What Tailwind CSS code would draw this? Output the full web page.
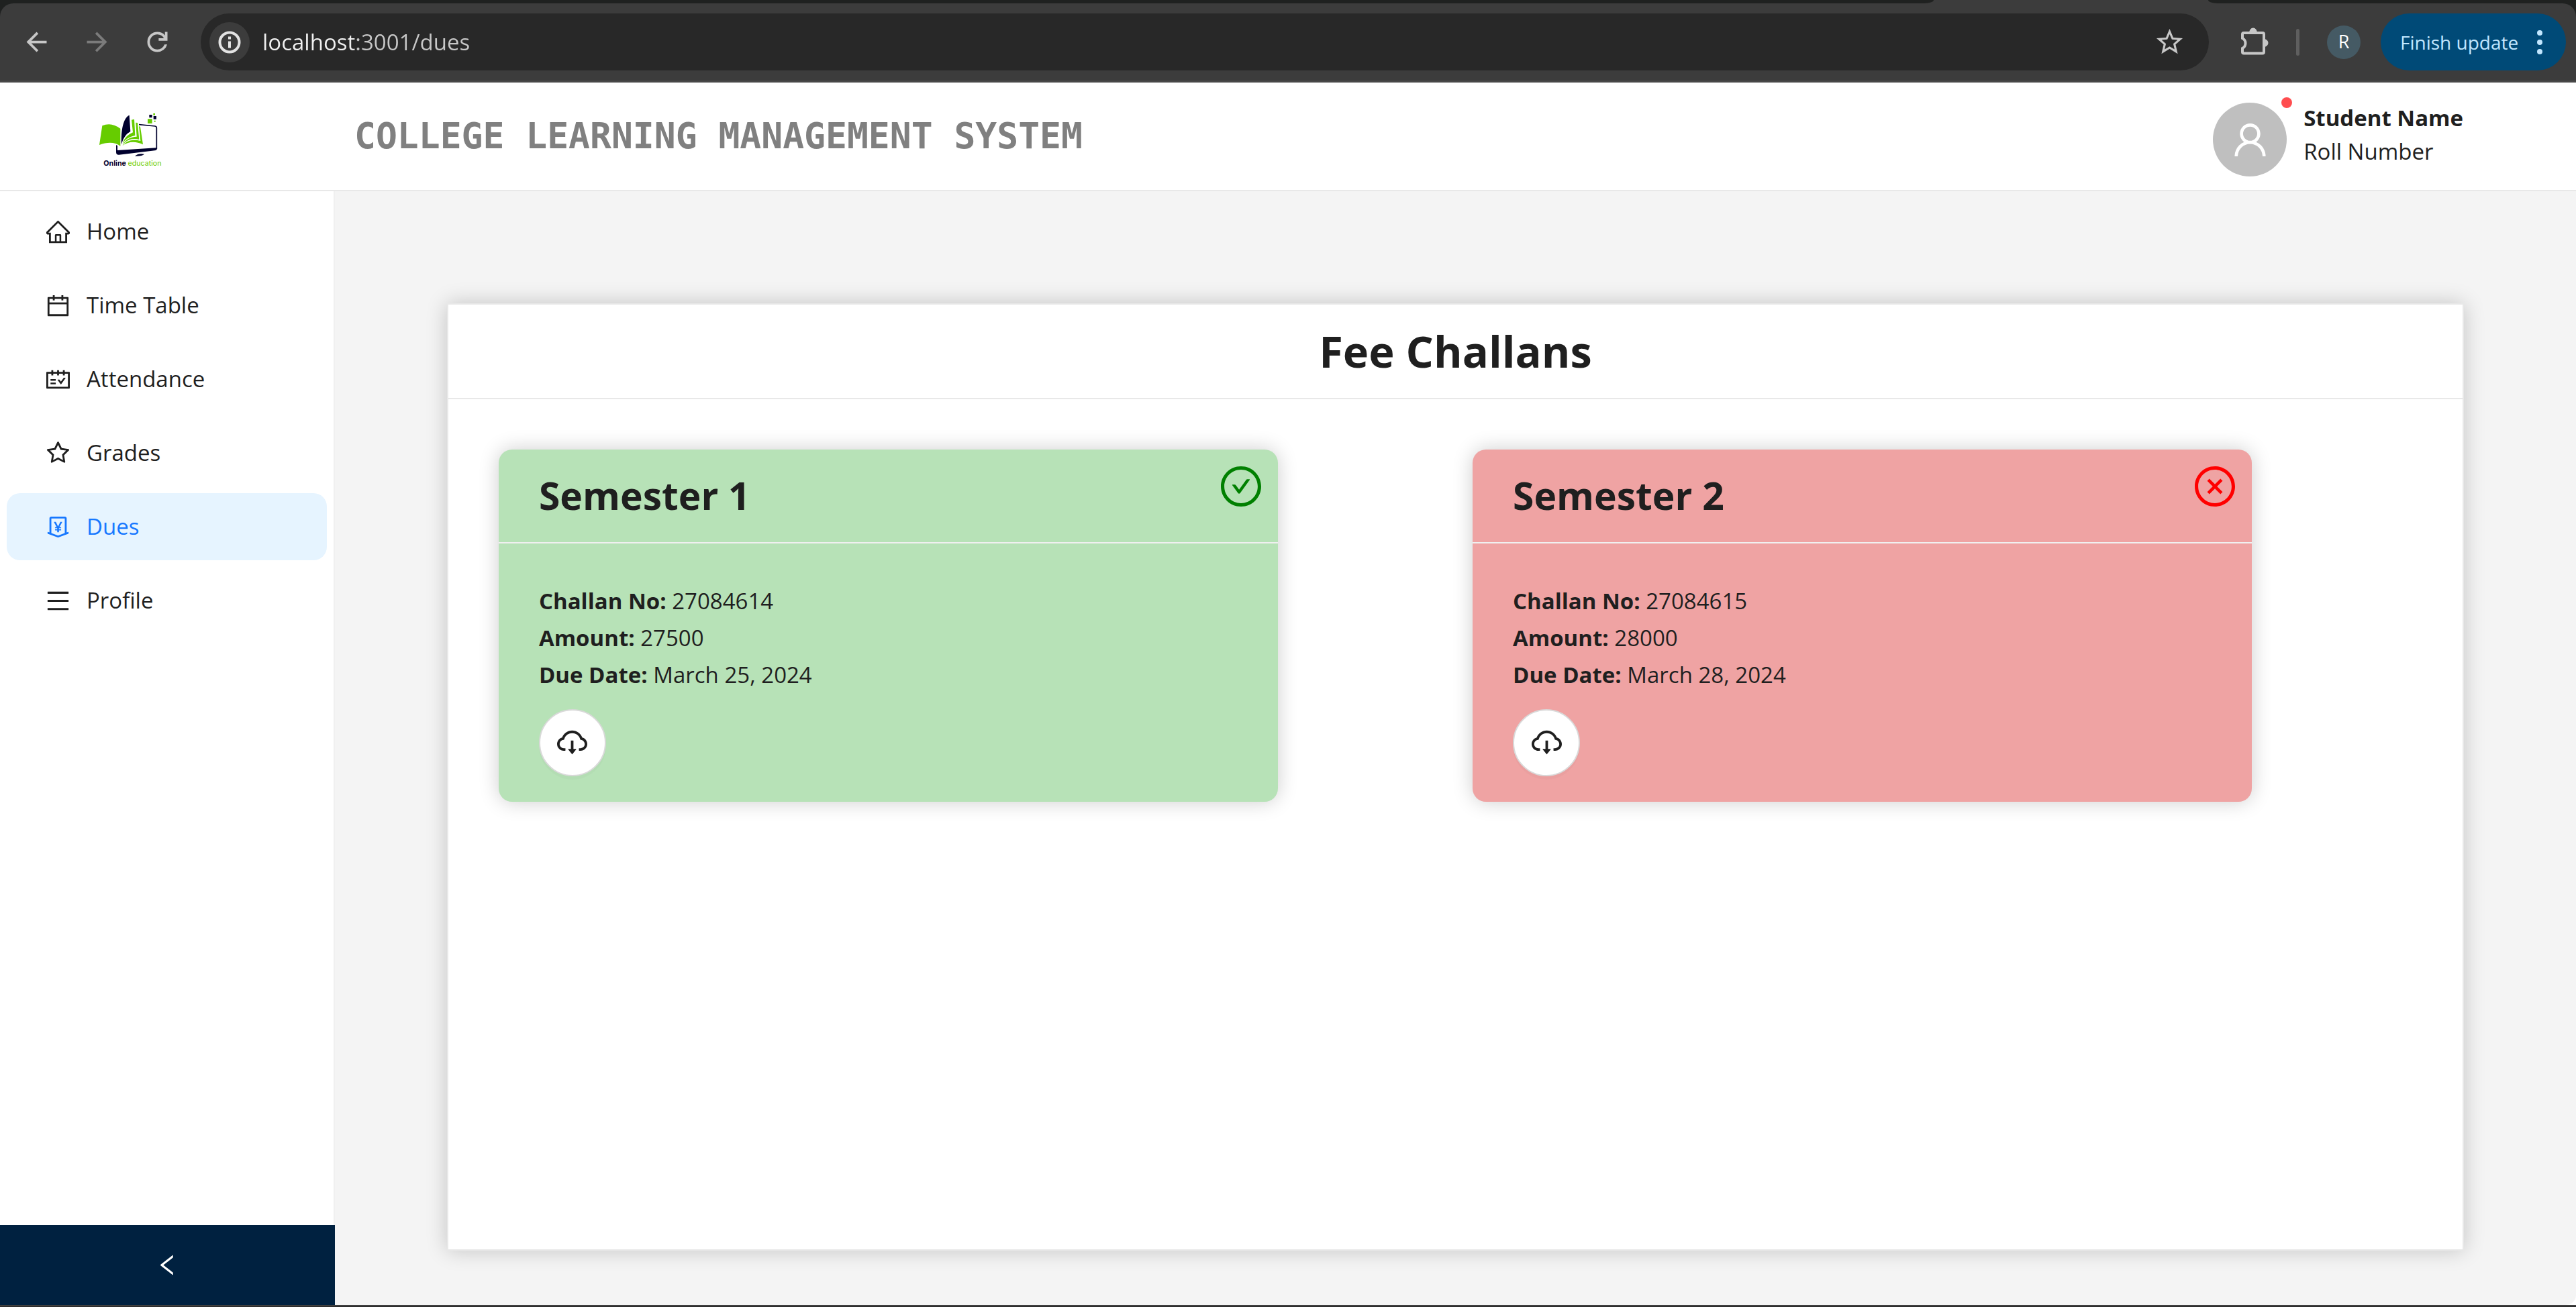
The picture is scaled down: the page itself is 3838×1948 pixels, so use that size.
<!DOCTYPE html>
<html lang="en">
<head>
<meta charset="utf-8">
<title>College Learning Management System</title>
<script src="https://cdn.jsdelivr.net/npm/@tailwindcss/browser@4"></script>
</head>
<body class="flex min-h-screen flex-col bg-white font-['Open_Sans',sans-serif] text-[33px] text-[#1f1f1f]">

<!-- Browser toolbar -->
<div class="bg-[#1f2120]">
  <div class="flex h-[5px] bg-[#3c3c3c]">
    <div class="flex-1 rounded-br-[14px_5px] bg-[#1f2120]"></div>
    <div class="w-[409px]"></div>
    <div class="w-[548px] rounded-bl-[14px_5px] bg-[#1f2120]"></div>
  </div>
  <div class="flex items-center rounded-t-[20px] border-b-[3px] border-[#484848] bg-[#3c3c3c] py-[15px] pr-[15px] pl-[9px]">
    <button type="button" aria-label="Back" class="flex w-[90px] justify-center text-[#c7c7c7]">
      <svg class="size-[45px]" viewBox="0 0 24 24" fill="currentColor"><path d="m7.825 13l5.6 5.6L12 20l-8-8l8-8l1.425 1.4l-5.6 5.6H20v2z"/></svg>
    </button>
    <button type="button" aria-label="Forward" class="flex w-[90px] justify-center text-[#7b7b7b]">
      <svg class="size-[45px]" viewBox="0 0 24 24" fill="currentColor"><path d="m16.175 13l-5.6 5.6L12 20l8-8l-8-8l-1.425 1.4l5.6 5.6H4v2z"/></svg>
    </button>
    <button type="button" aria-label="Reload" class="flex w-[90px] justify-center text-[#c7c7c7]">
      <svg class="size-[45px]" viewBox="0 0 24 24" fill="currentColor"><path d="M12 20q-3.35 0-5.675-2.325T4 12t2.325-5.675T12 4q1.725 0 3.3.713T18 6.75V4h2v7h-7V9h4.2q-.8-1.4-2.187-2.2T12 6Q9.5 6 7.75 7.75T6 12t1.75 4.25T12 18q1.925 0 3.475-1.1T17.65 14h2.1q-.7 2.65-2.85 4.325T12 20"/></svg>
    </button>
    <div class="ml-5 flex h-[85px] flex-1 items-center rounded-full bg-[#282828] pr-[35px] pl-[13px]">
      <button type="button" aria-label="View site information" class="flex size-[60px] items-center justify-center rounded-full bg-[#3c3c3c]">
        <svg class="size-9" viewBox="0 0 36 36" fill="none" stroke="#e3e3e3" stroke-width="4"><circle cx="18" cy="18" r="14.5"/><path d="M18 16.500v10M18 9.500v4"/></svg>
      </button>
      <input type="text" aria-label="Address" value="localhost:3001/dues" class="ml-[19px] min-w-0 flex-1 bg-[linear-gradient(90deg,#f0f0f0_141px,#c7c7c7_141px)] bg-clip-text text-transparent outline-none">
      <button type="button" aria-label="Bookmark this page" class="text-[#c7c7c7]">
        <svg class="size-[47px]" viewBox="0 0 24 24" fill="currentColor"><path d="M22 9.240l-7.190-.62L12 2 9.190 8.630 2 9.240l5.460 4.730L5.820 21 12 17.270 18.180 21l-1.630-7.030L22 9.240zM12 15.400l-3.760 2.270 1-4.280-3.320-2.880 4.380-.38L12 6.100l1.710 4.040 4.380.38-3.320 2.880 1 4.280L12 15.400z"/></svg>
      </button>
    </div>
    <button type="button" aria-label="Extensions" class="ml-11">
      <svg class="size-12" viewBox="0 0 48 48" fill="#c7c7c7"><path d="M6 18V12Q6 10 8 10H36Q38 10 38 12V38.500Q38 40.500 36 40.500H8Q6 40.500 6 38.500V33A8.500 8.500 0 0 0 6 18Z" fill="none" stroke="#c7c7c7" stroke-width="4"/><path d="M16 10a6 7.500 0 0 1 12 0zM38 19a6.500 6 0 0 1 0 12z"/></svg>
    </button>
    <div class="ml-[38px] h-10 w-[5px] rounded-full bg-[#5f5f5f]"></div>
    <button type="button" aria-label="Account" class="ml-[41px] flex size-[50px] items-center justify-center rounded-full bg-[#455a64] text-[27px] text-white">R</button>
    <button type="button" class="ml-[30px] flex h-[85px] w-[276px] items-center justify-between rounded-full bg-[#004a77] pr-[35px] pl-[29px] text-[28px] text-[#c2e7ff]">
      Finish update
      <svg class="h-10 w-2" viewBox="0 0 8 40" fill="currentColor"><circle cx="4" cy="6" r="4"/><circle cx="4" cy="20" r="4"/><circle cx="4" cy="34" r="4"/></svg>
    </button>
  </div>
</div>

<!-- App header -->
<header class="flex h-[162px] items-center border-b-2 border-[#e8e8e8] bg-white pr-[168px] pl-[145px]">
  <svg class="size-[100px]" viewBox="75 9 300 300" role="img" aria-label="Online education">
    <g fill="#66cc00">
      <path d="M97 112Q138 94 178 125V203Q142 176 84 198Z"/>
      <path d="M228 86L240 83L244 156C218 162 200 172 188 192C196 166 210 154 234 142Z"/>
      <path d="M247 98L255 99L262 174C232 166 206 176 188 197C200 174 222 162 251 161Z"/>
      <path d="M261 114L267 117L279 196C246 180 212 182 187 202C204 180 232 170 268 180Z"/>
      <path d="M300 82h20v20h-20zM325 57h8v8h-8zM329 89h6v6h-6z"/>
    </g>
    <g fill="#00002e">
      <path d="M183 196C180 130 192 76 218 65L223 138C204 148 190 168 183 196Z"/>
      <path d="M159 198L165 202V222L338 211L342 214Q342 222 332 223L172 242Q159 243 159 230Z"/>
      <path d="M243 248Q258 234 285 239Q276 249 243 248Z"/>
      <path d="M307 63h13v13h-13zM326 69h13v14h-13z"/>
      <path d="M261 107L333 114Q340 115 340 122V216" fill="none" stroke="#00002e" stroke-width="5"/>
    </g>
    <text x="103" y="290" font-family="Inter, sans-serif" font-size="32" fill="#00002e" font-weight="700">Online <tspan fill="#66cc00" font-weight="400">education</tspan></text>
  </svg>
  <h1 class="ml-[283px] font-['DejaVu_Sans_Mono',monospace] text-[53px] font-bold text-[#808080]">COLLEGE LEARNING MANAGEMENT SYSTEM</h1>
  <div class="ml-auto flex gap-[25px] self-start pt-7">
    <div class="relative mt-0.5 flex size-[110px] items-center justify-center rounded-full bg-[#bfbfbf]">
      <svg class="size-[55px]" viewBox="64 64 896 896" fill="#fff"><path d="M858.500 763.600a374 374 0 00-80.600-119.500 375.630 375.630 0 00-119.500-80.600c-.4-.2-.8-.3-1.200-.5C719.500 518 760 444.700 760 362c0-137-111-248-248-248S264 225 264 362c0 82.700 40.500 156 102.800 201.100-.4.2-.8.3-1.200.5-44.800 18.900-85 46-119.500 80.600a375.630 375.630 0 00-80.600 119.500A371.700 371.700 0 00136 901.800a8 8 0 008 8.200h60c4.400 0 7.900-3.500 8-7.800 2-77.200 33-149.500 87.800-204.300 56.700-56.700 132-87.900 212.200-87.900s155.500 31.200 212.200 87.900C779 752.700 810 825 812 902.200c.1 4.400 3.600 7.800 8 7.800h60a8 8 0 008-8.200c-1-47.800-10.900-94.300-29.500-138.200zM512 534c-45.900 0-89.100-17.900-121.600-50.400S340 407.900 340 362c0-45.900 17.900-89.100 50.400-121.600S466.100 190 512 190s89.100 17.900 121.600 50.400S684 316.100 684 362c0 45.900-17.900 89.100-50.400 121.600S557.900 534 512 534z"/></svg>
      <span class="absolute -top-2 -right-2 size-4 rounded-full bg-[#ff4d4f]"></span>
    </div>
    <div class="leading-[50px]">
      <p class="font-bold">Student Name</p>
      <p>Roll Number</p>
    </div>
  </div>
</header>

<div class="flex flex-1">
  <!-- Side menu -->
  <aside class="flex w-[499px] shrink-0 flex-col bg-white">
    <nav class="flex flex-1 flex-col gap-[10px] border-r-2 border-[#f0f0f0] p-[10px] leading-[100px]">
      <a href="#home" class="flex items-center gap-[25px] rounded-[20px] pl-[59px]">
        <svg class="size-[35px]" viewBox="64 64 896 896" fill="currentColor"><path d="M946.500 505L560.100 118.800l-25.900-25.900a31.500 31.500 0 00-44.400 0L77.500 505a63.900 63.900 0 00-18.800 46c.4 35.200 29.700 63.300 64.900 63.300h42.500V940h691.800V614.300h43.400c17.100 0 33.200-6.700 45.300-18.800a63.600 63.600 0 0018.700-45.300c0-17-6.700-33.100-18.800-45.200zM568 868H456V664h112v204zm217.900-325.700V868H632V640c0-22.100-17.900-40-40-40H432c-22.100 0-40 17.900-40 40v228H238.100V542.300h-96l370-369.700 23.100 23.100L882 542.300h-96.100z"/></svg>
        Home</a>
      <a href="#timetable" class="flex items-center gap-[25px] rounded-[20px] pl-[59px]">
        <svg class="size-[35px]" viewBox="64 64 896 896" fill="currentColor"><path d="M880 184H712v-64c0-4.400-3.600-8-8-8h-56c-4.400 0-8 3.600-8 8v64H384v-64c0-4.400-3.600-8-8-8h-56c-4.400 0-8 3.600-8 8v64H144c-17.700 0-32 14.300-32 32v664c0 17.700 14.300 32 32 32h736c17.700 0 32-14.300 32-32V216c0-17.700-14.300-32-32-32zm-40 656H184V460h656v380zM184 392V256h128v48c0 4.400 3.600 8 8 8h56c4.400 0 8-3.600 8-8v-48h256v48c0 4.400 3.600 8 8 8h56c4.400 0 8-3.600 8-8v-48h128v136H184z"/></svg>
        Time Table</a>
      <a href="#attendance" class="flex items-center gap-[25px] rounded-[20px] pl-[59px]">
        <svg class="size-[35px]" viewBox="64 64 896 896" fill="currentColor"><path d="M928 224H768v-56c0-4.400-3.600-8-8-8h-56c-4.400 0-8 3.600-8 8v56H548v-56c0-4.400-3.600-8-8-8h-56c-4.400 0-8 3.600-8 8v56H328v-56c0-4.400-3.600-8-8-8h-56c-4.400 0-8 3.600-8 8v56H96c-17.700 0-32 14.300-32 32v576c0 17.700 14.300 32 32 32h832c17.700 0 32-14.300 32-32V256c0-17.700-14.300-32-32-32zm-40 568H136V296h120v56c0 4.400 3.600 8 8 8h56c4.400 0 8-3.600 8-8v-56h148v56c0 4.400 3.600 8 8 8h56c4.400 0 8-3.600 8-8v-56h148v56c0 4.400 3.600 8 8 8h56c4.400 0 8-3.600 8-8v-56h120v496zM416 496H232c-4.400 0-8 3.600-8 8v48c0 4.400 3.600 8 8 8h184c4.400 0 8-3.600 8-8v-48c0-4.400-3.600-8-8-8zm0 136H232c-4.400 0-8 3.600-8 8v48c0 4.400 3.600 8 8 8h184c4.400 0 8-3.600 8-8v-48c0-4.400-3.600-8-8-8zm308.200-177.400L620.600 598.300l-52.800-73.100c-3-4.200-7.800-6.600-12.900-6.600H500c-6.500 0-10.300 7.400-6.500 12.700l114.100 158.200a15.900 15.900 0 0025.800 0l165-228.700c3.800-5.300 0-12.700-6.500-12.700H737c-5-.1-9.800 2.400-12.800 6.500z"/></svg>
        Attendance</a>
      <a href="#grades" class="flex items-center gap-[25px] rounded-[20px] pl-[59px]">
        <svg class="size-[35px]" viewBox="64 64 896 896" fill="currentColor"><path d="M908.100 353.100l-253.900-36.900L540.700 86.100c-3.100-6.300-8.200-11.400-14.500-14.500-15.800-7.800-35-1.300-42.900 14.500L369.800 316.200l-253.900 36.900c-7 1-13.400 4.300-18.300 9.300a32.050 32.050 0 00.6 45.300l183.700 179.100-43.400 252.900a31.950 31.950 0 0046.400 33.700L512 754l227.100 119.400c6.200 3.300 13.400 4.400 20.300 3.200 17.400-3 29.100-19.500 26.100-36.900l-43.400-252.900 183.700-179.100c5-4.900 8.300-11.300 9.300-18.300 2.700-17.500-9.500-33.700-27-36.300zM664.800 561.600l36.100 210.300L512 672.700 323.100 772l36.100-210.300-152.800-149L417.600 382 512 190.700 606.400 382l211.200 30.700-152.800 148.900z"/></svg>
        Grades</a>
      <a href="#dues" aria-current="page" class="flex items-center gap-[25px] rounded-[20px] bg-[#e6f4ff] pl-[59px] text-[#1677ff]">
        <svg class="size-[35px]" viewBox="64 64 896 896" fill="currentColor"><path d="M911.500 700.700a8 8 0 00-10.300-4.800L840 718.200V180c0-37.600-30.400-68-68-68H252c-37.600 0-68 30.400-68 68v538.200l-61.300-22.300c-.9-.3-1.800-.5-2.700-.5-4.400 0-8 3.600-8 8V763c0 3.300 2.100 6.300 5.300 7.500L501 910.100c7.100 2.600 14.800 2.600 21.900 0l383.800-139.500c3.200-1.200 5.300-4.200 5.300-7.500v-59.600c0-1-.2-1.900-.5-2.800zM512 837.500l-256-93.100V184h512v560.400l-256 93.100zM660.600 312h-54.500c-3 0-5.800 1.700-7.100 4.400l-84.700 168.800H511l-84.700-168.800a8 8 0 00-7.100-4.400h-55.700c-1.300 0-2.600.3-3.800 1-3.900 2.100-5.300 7-3.200 10.800l103.900 191.600h-57c-4.400 0-8 3.600-8 8v27.100c0 4.400 3.600 8 8 8h76v39h-76c-4.400 0-8 3.600-8 8v27.100c0 4.400 3.600 8 8 8h76V704c0 4.400 3.600 8 8 8h49.900c4.400 0 8-3.600 8-8v-63.500h76.300c4.400 0 8-3.600 8-8v-27.100c0-4.400-3.600-8-8-8h-76.300v-39h76.300c4.400 0 8-3.600 8-8v-27.100c0-4.400-3.600-8-8-8H564l103.700-191.600c.6-1.200 1-2.500 1-3.800-.1-4.300-3.700-7.900-8.100-7.900z"/></svg>
        Dues</a>
      <a href="#profile" class="flex items-center gap-[25px] rounded-[20px] pl-[59px]">
        <svg class="size-[35px]" viewBox="64 64 896 896" fill="currentColor"><path d="M904 160H120c-4.400 0-8 3.600-8 8v64c0 4.400 3.600 8 8 8h784c4.400 0 8-3.600 8-8v-64c0-4.400-3.600-8-8-8zm0 624H120c-4.400 0-8 3.600-8 8v64c0 4.400 3.600 8 8 8h784c4.400 0 8-3.600 8-8v-64c0-4.400-3.600-8-8-8zm0-312H120c-4.400 0-8 3.600-8 8v64c0 4.400 3.600 8 8 8h784c4.400 0 8-3.600 8-8v-64c0-4.400-3.600-8-8-8z"/></svg>
        Profile</a>
    </nav>
    <button type="button" aria-label="Collapse menu" class="flex h-[119px] items-center justify-center bg-[#002140] text-white">
      <svg class="size-[35px]" viewBox="64 64 896 896" fill="currentColor"><path d="M724 218.300V141c0-6.700-7.700-10.400-12.900-6.300L260.300 486.800a31.860 31.860 0 000 50.300l450.800 352.100c5.300 4.100 12.900.4 12.900-6.300v-77.300c0-4.900-2.300-9.600-6.100-12.600l-360-281 360-281.100c3.800-3 6.100-7.700 6.100-12.600z"/></svg>
    </button>
  </aside>

  <!-- Fee challans -->
  <main class="flex flex-1 flex-col rounded-br-[15px] bg-[#f4f4f4]">
    <section class="mx-[5%] mt-[5%] mb-[81px] flex-1 border-2 border-[#e8e8e8] bg-white shadow-[0_0_30px_rgba(0,0,0,0.2)]">
      <h2 class="flex h-[141px] items-center justify-center border-b-2 border-[#e8e8e8] text-[65px] font-bold">Fee Challans</h2>
      <div class="grid grid-cols-2 py-[75px] pr-6 pl-[75px]">
        <article class="relative w-4/5 rounded-[20px] bg-[#b7e2b7] pb-[38px] shadow-[0_0_30px_rgba(0,0,0,0.2)]">
          <h3 class="flex h-[140px] items-center border-b-2 border-[#f0f0f0] px-[60px] text-[57px] font-bold">Semester 1</h3>
          <svg class="absolute top-[25px] right-[25px] size-[60px]" viewBox="64 64 896 896" fill="#008000" role="img" aria-label="Paid"><path d="M699 353h-46.900c-10.200 0-19.900 4.900-25.900 13.300L469 584.300l-71.200-98.800c-6-8.300-15.600-13.300-25.900-13.300H325c-6.500 0-10.300 7.400-6.500 12.700l124.600 172.800a31.800 31.800 0 0051.700 0l210.600-292c3.900-5.300.1-12.700-6.400-12.700z"/><path d="M512 64C264.600 64 64 264.600 64 512s200.600 448 448 448 448-200.600 448-448S759.400 64 512 64zm0 820c-205.400 0-372-166.600-372-372s166.600-372 372-372 372 166.600 372 372-166.600 372-372 372z"/></svg>
          <div class="px-[60px] pt-[58px] leading-[55px]">
            <p><strong class="font-bold">Challan No:</strong> 27084614</p>
            <p><strong class="font-bold">Amount:</strong> 27500</p>
            <p><strong class="font-bold">Due Date:</strong> March 25, 2024</p>
            <button type="button" aria-label="Download challan" class="mt-6 flex size-[100px] items-center justify-center rounded-full border-2 border-[#d9d9d9] bg-white shadow-[0_5px_0_rgba(0,0,0,0.02)]">
              <svg class="size-[45px]" viewBox="64 64 896 896" fill="currentColor"><path d="M624 706.300h-74.100V464c0-4.400-3.600-8-8-8h-60c-4.400 0-8 3.600-8 8v242.300H400c-6.700 0-10.400 7.700-6.300 12.900l112 141.700a8 8 0 0012.600 0l112-141.700c4.100-5.200.4-12.900-6.300-12.900z"/><path d="M811.400 366.700C765.600 245.900 648.900 160 512.200 160S258.800 245.800 213 366.600C127.300 389.100 64 467.200 64 560c0 110.500 89.500 200 199.900 200H304c4.400 0 8-3.600 8-8v-60c0-4.400-3.600-8-8-8h-40.100c-33.700 0-65.400-13.400-89-37.700-23.500-24.200-36-56.800-34.900-90.600.9-26.400 9.900-51.200 26.200-72.100 16.700-21.300 40.100-36.800 66.100-43.700l37.900-9.900 13.900-36.600c8.600-22.800 20.600-44.100 35.700-63.400a245.600 245.600 0 0152.400-49.900c41.100-28.900 89.500-44.200 140-44.200s98.900 15.300 140 44.200c19.900 14 37.500 30.800 52.400 49.900 15.100 19.300 27.100 40.700 35.700 63.400l13.800 36.500 37.800 10C846.100 454.500 884 503.800 884 560c0 33.100-12.900 64.300-36.300 87.700a123.070 123.070 0 01-87.600 36.300H720c-4.400 0-8 3.600-8 8v60c0 4.400 3.600 8 8 8h40.100C870.500 760 960 670.500 960 560c0-92.700-63.100-170.700-148.600-193.300z"/></svg>
            </button>
          </div>
        </article>
        <article class="relative w-4/5 rounded-[20px] bg-[#efa3a3] pb-[38px] shadow-[0_0_30px_rgba(0,0,0,0.2)]">
          <h3 class="flex h-[140px] items-center border-b-2 border-[#f0f0f0] px-[60px] text-[57px] font-bold">Semester 2</h3>
          <svg class="absolute top-[25px] right-[25px] size-[60px]" viewBox="64 64 896 896" fill="#ff0000" role="img" aria-label="Unpaid"><path d="M365 365L659 659M659 365L365 659" stroke="#ff0000" stroke-width="68"/><path d="M512 64C264.600 64 64 264.600 64 512s200.600 448 448 448 448-200.600 448-448S759.400 64 512 64zm0 820c-205.400 0-372-166.600-372-372s166.600-372 372-372 372 166.600 372 372-166.600 372-372 372z"/></svg>
          <div class="px-[60px] pt-[58px] leading-[55px]">
            <p><strong class="font-bold">Challan No:</strong> 27084615</p>
            <p><strong class="font-bold">Amount:</strong> 28000</p>
            <p><strong class="font-bold">Due Date:</strong> March 28, 2024</p>
            <button type="button" aria-label="Download challan" class="mt-6 flex size-[100px] items-center justify-center rounded-full border-2 border-[#d9d9d9] bg-white shadow-[0_5px_0_rgba(0,0,0,0.02)]">
              <svg class="size-[45px]" viewBox="64 64 896 896" fill="currentColor"><path d="M624 706.300h-74.100V464c0-4.400-3.600-8-8-8h-60c-4.400 0-8 3.600-8 8v242.300H400c-6.700 0-10.400 7.700-6.300 12.900l112 141.700a8 8 0 0012.600 0l112-141.700c4.100-5.200.4-12.900-6.300-12.900z"/><path d="M811.400 366.700C765.600 245.900 648.900 160 512.200 160S258.800 245.800 213 366.600C127.300 389.100 64 467.200 64 560c0 110.500 89.500 200 199.900 200H304c4.400 0 8-3.600 8-8v-60c0-4.400-3.600-8-8-8h-40.100c-33.700 0-65.400-13.400-89-37.700-23.500-24.200-36-56.800-34.900-90.600.9-26.400 9.900-51.200 26.200-72.100 16.700-21.300 40.100-36.800 66.100-43.700l37.900-9.900 13.900-36.600c8.600-22.800 20.600-44.100 35.700-63.400a245.600 245.600 0 0152.400-49.900c41.100-28.900 89.500-44.200 140-44.200s98.900 15.300 140 44.200c19.900 14 37.500 30.800 52.400 49.900 15.100 19.300 27.100 40.700 35.700 63.400l13.800 36.500 37.800 10C846.100 454.500 884 503.800 884 560c0 33.100-12.900 64.300-36.300 87.700a123.070 123.070 0 01-87.600 36.300H720c-4.400 0-8 3.600-8 8v60c0 4.400 3.600 8 8 8h40.100C870.500 760 960 670.500 960 560c0-92.700-63.100-170.700-148.600-193.300z"/></svg>
            </button>
          </div>
        </article>
      </div>
    </section>
  </main>
</div>

<div class="h-[3px] border-t-2 border-[#3f3f3f] bg-[#2a2a2a]"></div>
</body>
</html>
